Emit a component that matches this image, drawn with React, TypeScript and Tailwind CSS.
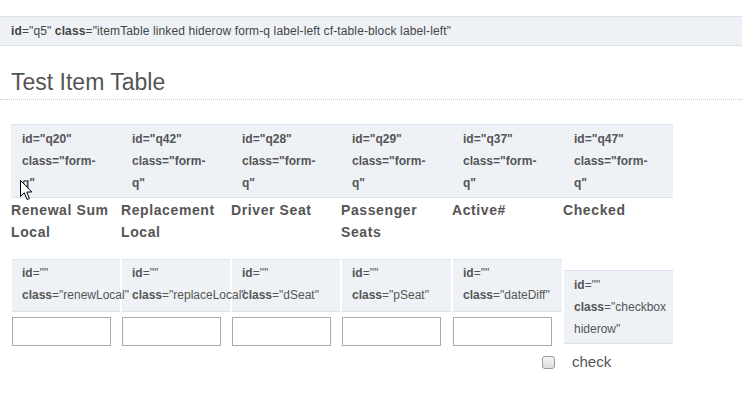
const headers = [
  { id: "q20", label: "Renewal Sum Local", w: "w-[110px]" },
  { id: "q42", label: "Replacement Local", w: "w-[110px]" },
  { id: "q28", label: "Driver Seat", w: "w-[110px]" },
  { id: "q29", label: "Passenger Seats", w: "w-[111px]" },
  { id: "q37", label: "Active#", w: "w-[111px]" },
  { id: "q47", label: "Checked", w: "w-[110px]" },
];

const fields = [
  { cls: "renewLocal", w: "w-[110px]" },
  { cls: "replaceLocal", w: "w-[110px]" },
  { cls: "dSeat", w: "w-[110px]" },
  { cls: "pSeat", w: "w-[111px]" },
  { cls: "dateDiff", w: "w-[111px]" },
];

function Attr({ name, value }: { name: string; value: string }) {
  return (
    <>
      <b className="font-bold">{name}</b>={value}
    </>
  );
}

function Cursor() {
  return (
    <svg
      className="absolute left-[20px] top-[180px]"
      width="13"
      height="21"
      viewBox="0 0 13 21"
      aria-hidden="true"
    >
      <path
        d="M0.5 0.5 L0.5 16.5 L4.3 12.8 L7 19.5 L9.4 18.5 L6.8 12 L11.8 12 Z"
        fill="#fff"
        stroke="#000"
        strokeWidth="1"
        strokeLinejoin="miter"
      />
    </svg>
  );
}

export default function App() {
  return (
    <div className="relative h-[395px] w-[742px] overflow-hidden bg-white font-['Liberation_Sans',Arial,sans-serif] text-[#555]">
      <div className="mt-[16px] h-[30px] border-y border-[#dae4ee] bg-[#eef2f6] px-[11px] text-[12px] leading-[28px] tracking-[0.12px] text-[#444]">
        <Attr name="id" value={'"q5" '} />
        <Attr name="class" value={'"itemTable linked hiderow form-q label-left cf-table-block label-left"'} />
      </div>

      <h2 className="mt-[21px] border-b border-dotted border-[#c8c8c8] pb-[2px] pl-[11px] text-[23px] font-normal leading-[30px] text-[#555]">
        Test Item Table
      </h2>

      <div className="ml-[11px] mt-[24px] w-[662px]">
        <div className="flex border-y border-[#dae4ee] bg-[#eef2f6] pb-[3px] pt-[3px] text-[12px] font-bold leading-[22px]">
          {headers.map((h) => (
            <div key={h.id} className={`${h.w} pl-[11px]`}>
              <div>id="{h.id}"</div>
              <div>class="form-</div>
              <div>q"</div>
            </div>
          ))}
        </div>

        <div className="flex pt-[1px] text-[14px] font-bold leading-[22px] tracking-[0.6px]">
          {headers.map((h) => (
            <div key={h.id} className={`${h.w} pr-[1px]`}>
              {h.label}
            </div>
          ))}
        </div>

        <div className="mt-[16px] flex items-start">
          {fields.map((f) => (
            <div key={f.cls} className={`${f.w} px-[1px]`}>
              <div className="border-y border-[#dae4ee] bg-[#eef2f6] pb-[5px] pl-[10px] pt-[2px] text-[12px] leading-[22px] whitespace-nowrap">
                <div className="relative">
                  <Attr name="id" value={'""'} />
                </div>
                <div className="relative">
                  <Attr name="class" value={`"${f.cls}"`} />
                </div>
              </div>
              <input
                type="text"
                className="mt-[5px] block h-[29px] w-[99px] border border-[#aaa] bg-white"
              />
            </div>
          ))}
          <div className="mt-[11px] w-[110px] pl-[1px]">
            <div className="border-y border-[#dae4ee] bg-[#eef2f6] pb-[3px] pl-[10px] pt-[3px] text-[12px] leading-[22px]">
              <div>
                <Attr name="id" value={'""'} />
              </div>
              <div>
                <Attr name="class" value={'"checkbox'} />
              </div>
              <div>hiderow"</div>
            </div>
          </div>
        </div>

        <label className="mt-[6px] flex items-center pl-[531px] text-[15px] leading-[20px]">
          <span className="block h-[13px] w-[13px] rounded-[3px] border border-[#9a9a9a] bg-gradient-to-b from-[#f6f6f6] to-[#dcdcdc]" />
          <span className="ml-[17px]">check</span>
        </label>
      </div>

      <Cursor />
    </div>
  );
}
